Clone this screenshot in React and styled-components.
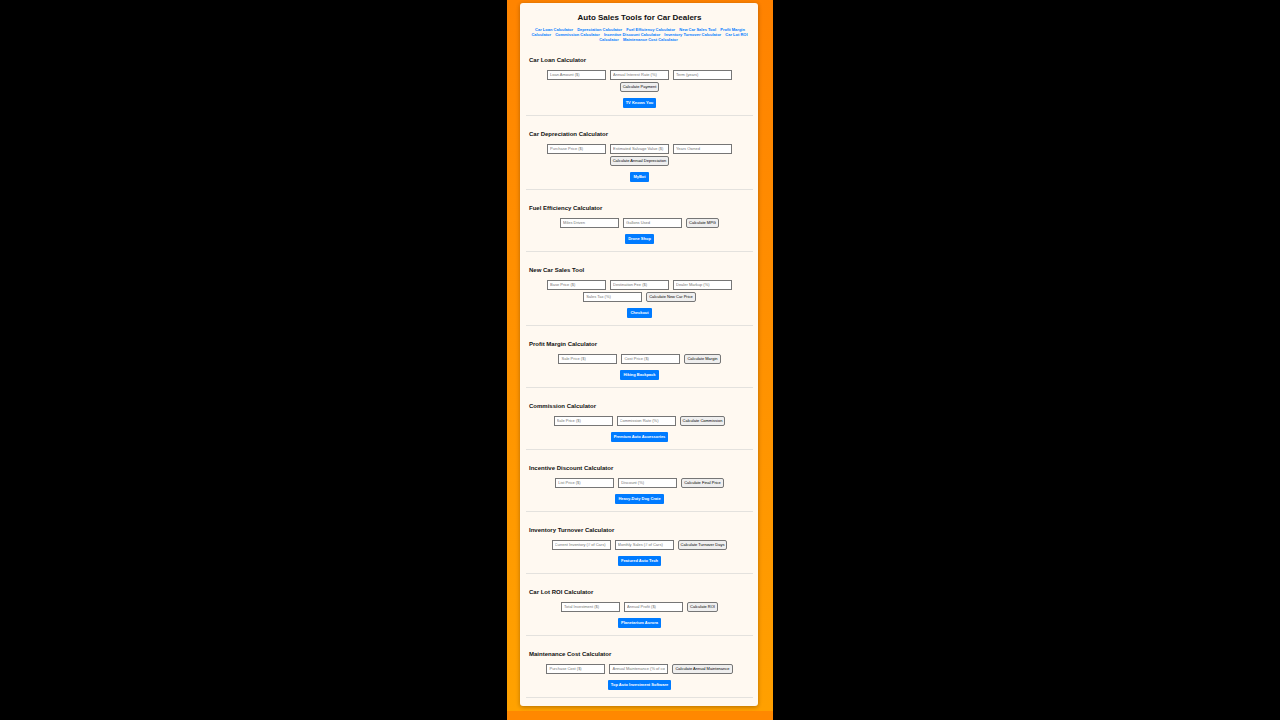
import styled, { createGlobalStyle } from 'styled-components'

const GlobalStyle = createGlobalStyle`
* {
box-sizing: border-box;
}
body {
margin: 0;
background-color: #000;
font-family: "Liberation Sans", Arial, sans-serif;
}
`

const Page = styled.div`
width: 100%;
max-width: 266px;
min-height: 100vh;
margin: 0 auto;
background-color: #ff8800;
`

const Backdrop = styled.div`
padding: 3px 15px 5px 13px;
background: linear-gradient(190deg, #ff8200, #ffa200);
`

const Card = styled.main`
padding: 6px 5px 8px 6px;
border-radius: 3px;
background-color: #fff9f1;
box-shadow: 0 1px 4px rgba(0, 0, 0, 0.3);
`

const Title = styled.h1`
margin: 4px 0;
font-size: 8px;
line-height: 10px;
text-align: center;
color: #111;
`

const Nav = styled.nav`
padding: 0 3px;
font-size: 4px;
line-height: 5px;
text-align: center;
`

const NavLink = styled.a`
margin: 0 2px 0 1px;
font-weight: bold;
color: #007bff;
text-decoration: none;
`

const Section = styled.section`
padding: 14px 3px 7px;
border-bottom: 1px solid #e4e2de;
`

const SectionTitle = styled.h2`
margin: 0 0 6px;
font-size: 6px;
line-height: 8px;
color: #111;
`

const Form = styled.form`
display: flex;
flex-wrap: wrap;
justify-content: center;
gap: 2px 4px;
margin-bottom: 6px;
`

const Field = styled.input`
width: 59px;
height: 10px;
padding: 0 2px 1px;
border: 1px solid #767676;
background-color: #fff;
font-family: inherit;
font-size: 4px;

&::placeholder {
color: #757575;
}
`

const Button = styled.button`
height: 10px;
padding: 0 2px;
border: 1px solid #767676;
border-radius: 2px;
background-color: #efefef;
font-family: inherit;
font-size: 4px;
line-height: 8px;
color: #000;
`

const LinkRow = styled.div`
display: flex;
justify-content: center;
`

const PromoLink = styled.a`
padding: 0 3px;
border-radius: 1px;
background-color: #007bff;
font-size: 4px;
font-weight: bold;
line-height: 10px;
color: #fff;
text-decoration: none;
`

const tools = [
    { id: 'loan', nav: 'Car Loan Calculator', title: 'Car Loan Calculator', fields: ['Loan Amount ($)', 'Annual Interest Rate (%)', 'Term (years)'], action: 'Calculate Payment', promo: 'TV Knows You' },
    { id: 'depreciation', nav: 'Depreciation Calculator', title: 'Car Depreciation Calculator', fields: ['Purchase Price ($)', 'Estimated Salvage Value ($)', 'Years Owned'], action: 'Calculate Annual Depreciation', promo: 'MyBot' },
    { id: 'fuel', nav: 'Fuel Efficiency Calculator', title: 'Fuel Efficiency Calculator', fields: ['Miles Driven', 'Gallons Used'], action: 'Calculate MPG', promo: 'Drone Shop' },
    { id: 'sales', nav: 'New Car Sales Tool', title: 'New Car Sales Tool', fields: ['Base Price ($)', 'Destination Fee ($)', 'Dealer Markup (%)', 'Sales Tax (%)'], action: 'Calculate New Car Price', promo: 'Checkout' },
    { id: 'margin', nav: 'Profit Margin Calculator', title: 'Profit Margin Calculator', fields: ['Sale Price ($)', 'Cost Price ($)'], action: 'Calculate Margin', promo: 'Hiking Backpack' },
    { id: 'commission', nav: 'Commission Calculator', title: 'Commission Calculator', fields: ['Sale Price ($)', 'Commission Rate (%)'], action: 'Calculate Commission', promo: 'Premium Auto Accessories' },
    { id: 'incentive', nav: 'Incentive Discount Calculator', title: 'Incentive Discount Calculator', fields: ['List Price ($)', 'Discount (%)'], action: 'Calculate Final Price', promo: 'Heavy-Duty Dog Crate' },
    { id: 'turnover', nav: 'Inventory Turnover Calculator', title: 'Inventory Turnover Calculator', fields: ['Current Inventory (# of Cars)', 'Monthly Sales (# of Cars)'], action: 'Calculate Turnover Days', promo: 'Featured Auto Tech' },
    { id: 'roi', nav: 'Car Lot ROI Calculator', title: 'Car Lot ROI Calculator', fields: ['Total Investment ($)', 'Annual Profit ($)'], action: 'Calculate ROI', promo: 'Planetarium Aurora' },
    { id: 'maintenance', nav: 'Maintenance Cost Calculator', title: 'Maintenance Cost Calculator', fields: ['Purchase Cost ($)', 'Annual Maintenance (% of cost)'], action: 'Calculate Annual Maintenance', promo: 'Top Auto Investment Software' },
]

const Calculator = ({ id, title, fields, action, promo }) => {
    return (
        <Section id={id}>
            <SectionTitle>{title}</SectionTitle>
            <Form onSubmit={(e) => e.preventDefault()}>
                {fields.map((field) => (
                    <Field key={field} type="text" placeholder={field} aria-label={field} />
                ))}
                <Button type="submit">{action}</Button>
            </Form>
            <LinkRow>
                <PromoLink href="#">{promo}</PromoLink>
            </LinkRow>
        </Section>
    )
}

const App = () => {
    return (
        <>
            <GlobalStyle />
            <Page>
                <Backdrop>
                    <Card>
                        <Title>Auto Sales Tools for Car Dealers</Title>
                        <Nav>
                            {tools.map((tool) => (
                                <span key={tool.id}>
                                    <NavLink href={`#${tool.id}`}>{tool.nav}</NavLink>{' '}
                                </span>
                            ))}
                        </Nav>
                        {tools.map((tool) => (
                            <Calculator key={tool.id} {...tool} />
                        ))}
                    </Card>
                </Backdrop>
            </Page>
        </>
    )
}

export default App
